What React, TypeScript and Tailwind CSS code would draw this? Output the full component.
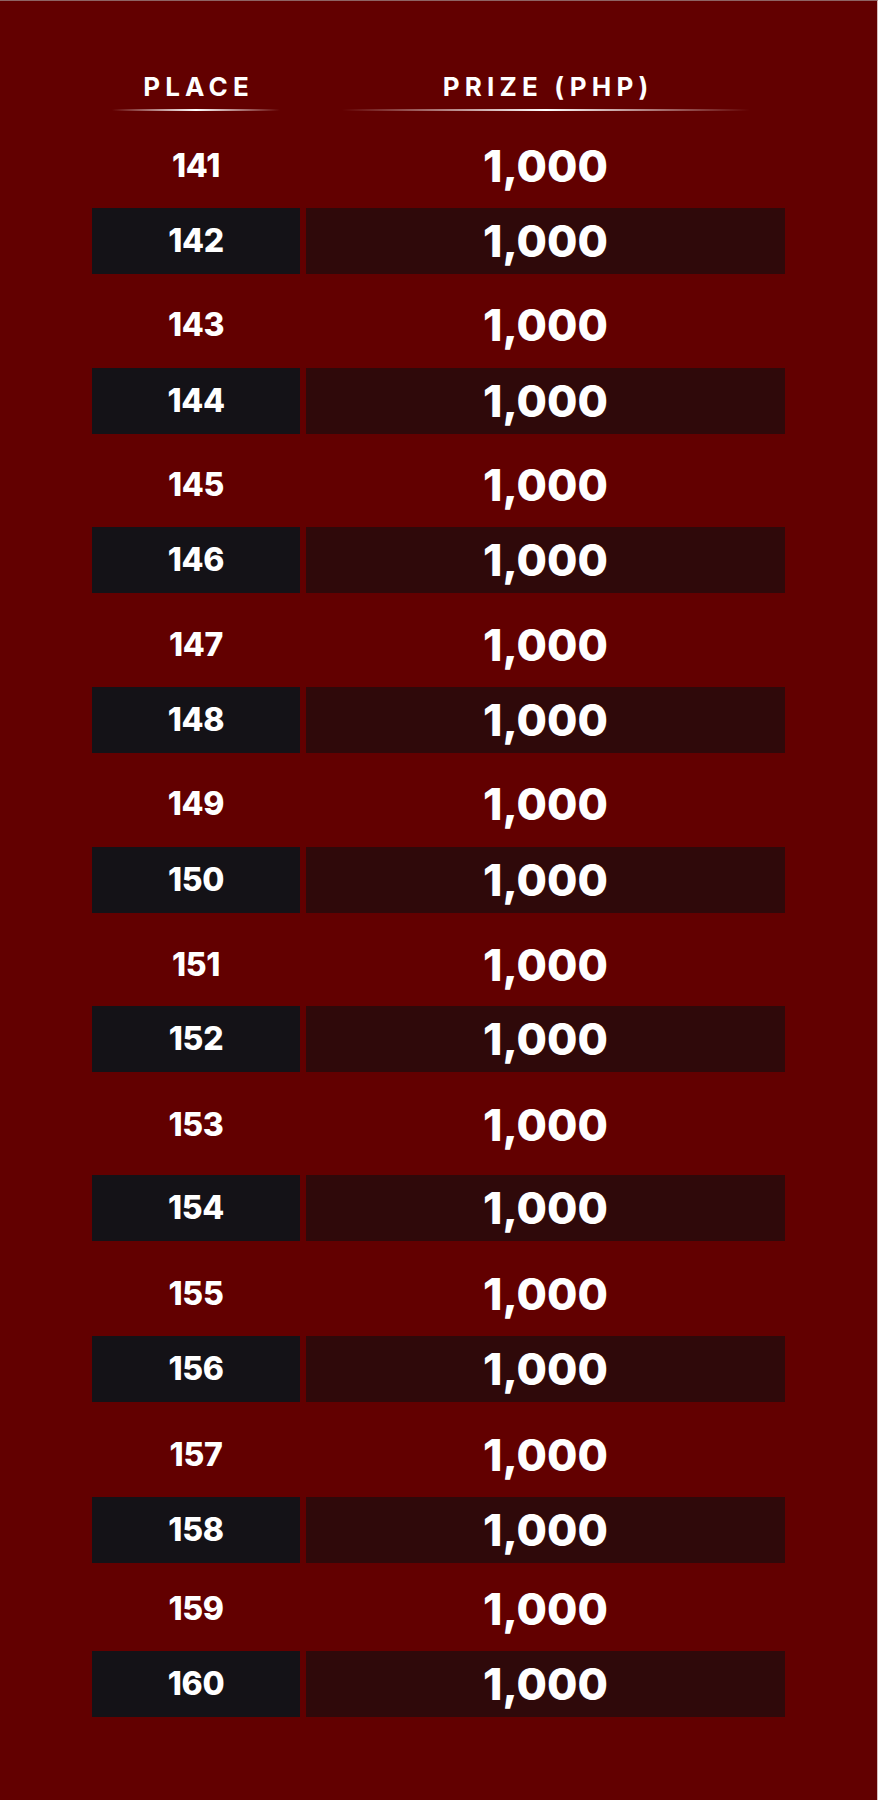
import React from "react";

type Row = { n: number; shaded: boolean; cls: string };

const rows: Row[] = [
  { n: 141, shaded: false, cls: "h-[97px] pt-[12px]" },
  { n: 142, shaded: true, cls: "h-[66px]" },
  { n: 143, shaded: false, cls: "h-[94px] pt-[7px]" },
  { n: 144, shaded: true, cls: "h-[66px]" },
  { n: 145, shaded: false, cls: "h-[93px] pt-[9px]" },
  { n: 146, shaded: true, cls: "h-[66px]" },
  { n: 147, shaded: false, cls: "h-[94px] pt-[9px]" },
  { n: 148, shaded: true, cls: "h-[66px]" },
  { n: 149, shaded: false, cls: "h-[94px] pt-[8px]" },
  { n: 150, shaded: true, cls: "h-[66px]" },
  { n: 151, shaded: false, cls: "h-[93px] pt-[11px]" },
  { n: 152, shaded: true, cls: "h-[66px]" },
  { n: 153, shaded: false, cls: "h-[103px] pt-[3px]" },
  { n: 154, shaded: true, cls: "h-[66px]" },
  { n: 155, shaded: false, cls: "h-[95px] pt-[10px]" },
  { n: 156, shaded: true, cls: "h-[66px]" },
  { n: 157, shaded: false, cls: "h-[95px] pt-[10px]" },
  { n: 158, shaded: true, cls: "h-[66px]" },
  { n: 159, shaded: false, cls: "h-[88px] pt-[3px]" },
  { n: 160, shaded: true, cls: "h-[66px]" },
];

export default function App() {
  return (
    <div
      className="w-[878px] h-[1800px] bg-[#620000] border-t border-r border-t-[#8e6464] border-r-[#d9bcbc] text-white"
      style={{ fontFamily: "Inter, 'Noto Sans', sans-serif" }}
    >
      <div className="ml-[92px] w-[693px] pt-[70px]">
        {/* Header */}
        <div className="grid grid-cols-[208px_479px] gap-x-[6px]">
          <div className="flex flex-col items-center">
            <div className="text-[26px] leading-[32px] font-bold tracking-[0.2em] pl-[0.2em]">
              PLACE
            </div>
            <div className="mt-[6px] h-[2px] w-[168px] bg-linear-to-r from-transparent via-white to-transparent" />
          </div>
          <div className="flex flex-col items-center">
            <div className="text-[26px] leading-[32px] font-bold tracking-[0.2em] pl-[0.2em]">
              PRIZE (PHP)
            </div>
            <div className="mt-[6px] h-[2px] w-[408px] bg-linear-to-r from-transparent via-white to-transparent" />
          </div>
        </div>

        {/* Rows */}
        <div className="flex flex-col">
          {rows.map((r) => (
            <div
              key={r.n}
              className={`grid grid-cols-[208px_479px] gap-x-[6px] ${r.cls}`}
            >
              <div
                className={`flex items-center justify-center ${
                  r.shaded ? "bg-[#141217]" : ""
                }`}
              >
                <span className="text-[32px] leading-none font-extrabold tracking-[-0.01em]">
                  {r.n}
                </span>
              </div>
              <div
                className={`flex items-center justify-center ${
                  r.shaded ? "bg-[#2f090a]" : ""
                }`}
              >
                <span className="text-[44px] leading-none font-extrabold">
                  1,000
                </span>
              </div>
            </div>
          ))}
        </div>
      </div>
    </div>
  );
}
